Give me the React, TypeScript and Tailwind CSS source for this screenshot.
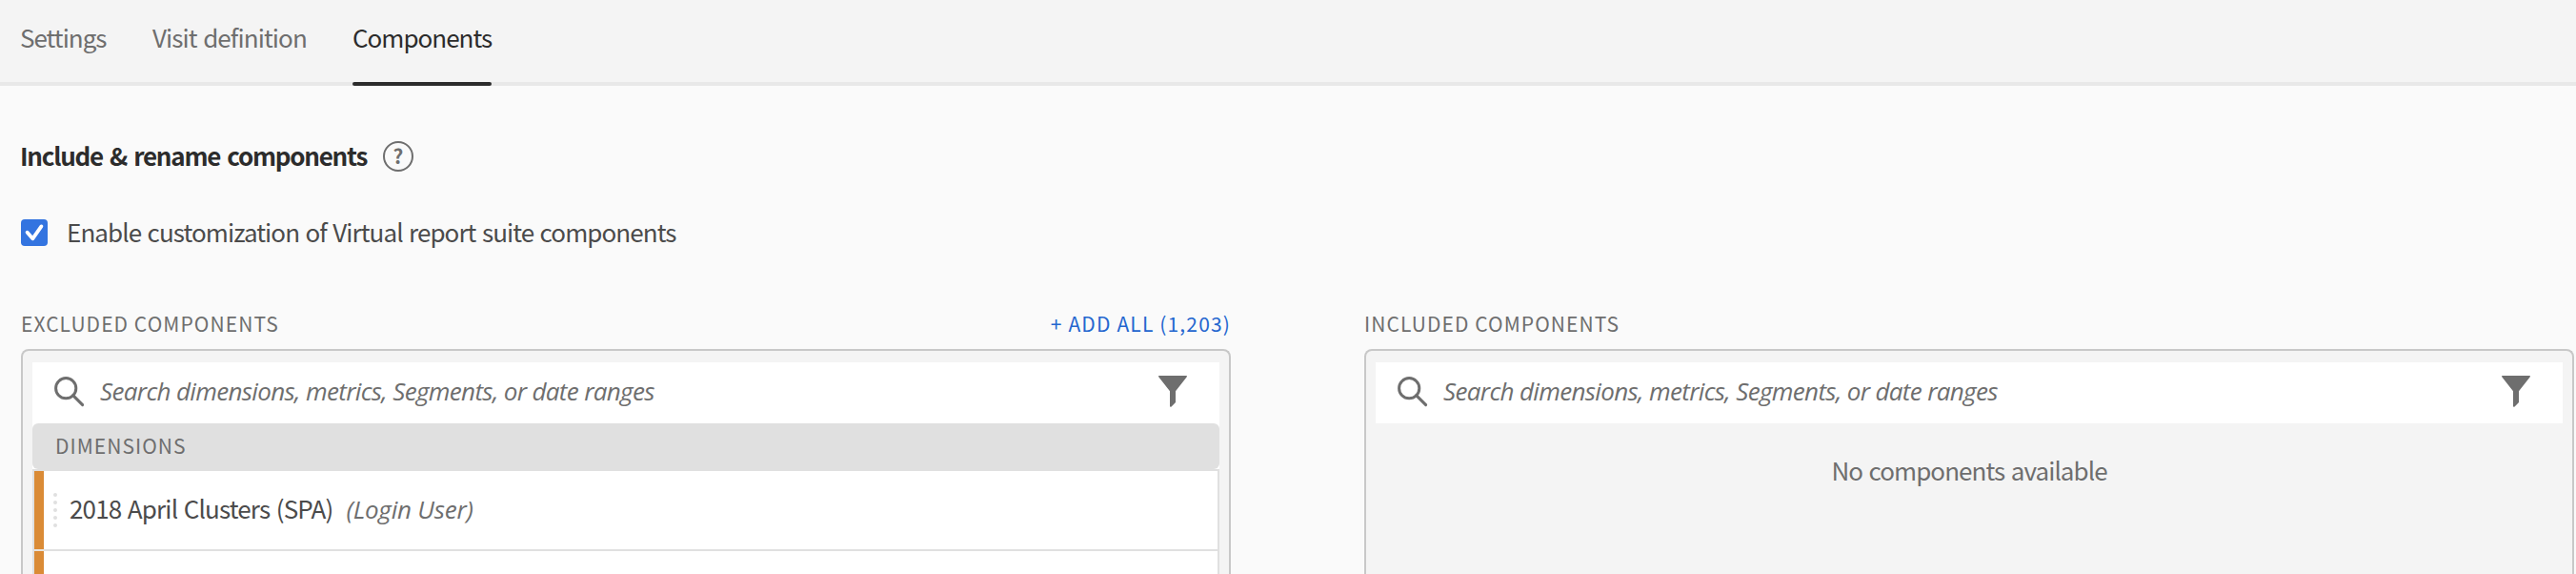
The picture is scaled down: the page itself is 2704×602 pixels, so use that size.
import type { ReactNode } from "react";

function SearchIcon() {
  return (
    <svg width="32" height="32" viewBox="0 0 32 32" fill="none" stroke="#6e6e6e" className="-mt-0.5 shrink-0">
      <circle cx="12.2" cy="12.2" r="10.6" strokeWidth="3" />
      <path d="M19.6 19.6 L29.6 29.6" strokeWidth="3" strokeLinecap="round" />
    </svg>
  );
}

function FunnelIcon() {
  return (
    <svg width="30" height="33" viewBox="0 0 30 33" fill="#6e6e6e" className="mt-[-3px] shrink-0">
      <path d="M0.6 0 H29.4 Q30 0 30 0.6 L29.6 1.4 L18 16.2 V28 L13.6 32.6 Q12 33.2 12 32 V16.2 L0.4 1.4 L0 0.6 Q0 0 0.6 0Z" />
    </svg>
  );
}

function SearchBar() {
  return (
    <div className="flex h-16 items-center bg-white pr-[34px] pl-[23px]">
      <SearchIcon />
      <span className="-mt-1 ml-4 flex-1 font-['Open_Sans',sans-serif] text-[26px] leading-8 tracking-[-0.66px] whitespace-nowrap text-[#6e6e6e] italic">
        Search dimensions, metrics, Segments, or date ranges
      </span>
      <FunnelIcon />
    </div>
  );
}

function Panel({ title, action, children }: { title: string; action?: string; children: ReactNode }) {
  return (
    <section className="flex w-[1270px] shrink-0 flex-col">
      <div className="flex h-[41px] justify-between text-[21px] leading-[29px] tracking-[1.07px] text-[#6e6e6e]">
        <h3>{title}</h3>
        {action && <button className="h-[29px] tracking-[1.15px] text-[#2466cf]">{action}</button>}
      </div>
      <div className="flex-1 rounded-t-lg border-2 border-b-0 border-[#c8c8c8] bg-[#f4f4f4] px-2.5 pt-3">
        <SearchBar />
        {children}
      </div>
    </section>
  );
}

function DragDots() {
  return (
    <div className="mt-[-1px] ml-2.5 flex flex-col gap-1">
      {[0, 1, 2, 3, 4].map((i) => (
        <span key={i} className="size-1 rounded-full bg-[#e0e0e0]" />
      ))}
    </div>
  );
}

function Row({ name, detail }: { name?: string; detail?: string }) {
  return (
    <div className="flex h-[84px] bg-white">
      <div className="w-2.5 border-b-2 border-[#e8e3dd] bg-[#da8b36]" />
      <div className="flex flex-1 items-center border-b-2 border-[#e0e0e0]">
        {name && (
          <>
            <DragDots />
            <div className="-mt-1 ml-[13px] flex items-baseline gap-[14px] text-[26px] leading-8 whitespace-nowrap">
              <span className="tracking-[-0.84px] text-[#4b4b4b] [word-spacing:1.5px]">{name}</span>
              <span className="font-['Open_Sans',sans-serif] tracking-[-0.2px] text-[#6e6e6e] italic">{detail}</span>
            </div>
          </>
        )}
      </div>
    </div>
  );
}

export default function App() {
  return (
    <div className="flex h-[602px] w-[2704px] flex-col overflow-hidden bg-[#fafafa] font-['Noto_Sans_CJK_SC',sans-serif]">
      <nav className="flex h-[90px] shrink-0 bg-[#f4f4f4] pl-[21px] text-[26px] leading-8 tracking-[-1px] whitespace-nowrap text-[#6e6e6e] shadow-[inset_0_-4px_0_#e8e8e8]">
        <div className="w-[139px] pt-[23px]">Settings</div>
        <div className="w-[210px] pt-[23px] tracking-[-0.9px] [word-spacing:1.5px]">Visit definition</div>
        <div className="flex w-[146px] flex-col justify-between pt-[23px] text-[#2c2c2c]">
          <span>Components</span>
          <span className="h-1 rounded-sm bg-[#2c2c2c]" />
        </div>
      </nav>

      <main className="flex flex-1 flex-col pl-[22px]">
        <div className="mt-14 flex h-8 items-center">
          <h2 className="mt-0.5 -ml-px w-[381px] text-[26px] leading-8 font-bold tracking-[-1.24px] whitespace-nowrap text-[#2c2c2c] [word-spacing:2.5px]">
            Include &amp; rename components
          </h2>
          <span className="mt-1 flex size-8 items-center justify-center rounded-full border-2 border-[#6e6e6e] text-[21px] leading-[28px] font-bold text-[#6e6e6e]">
            <span className="-mt-0.5">?</span>
          </span>
        </div>

        <label className="mt-12 flex h-9 items-center">
          <svg width="28" height="28" viewBox="0 0 28 28" fill="none">
            <rect width="28" height="28" rx="4" fill="#3374e0" />
            <path d="M6.6 13.7 L12.3 20.3 L21.4 7.4" stroke="#fff" strokeWidth="3.8" strokeLinecap="round" strokeLinejoin="round" />
          </svg>
          <span className="-mt-[3px] ml-5 text-[26px] leading-8 tracking-[-0.92px] whitespace-nowrap text-[#4b4b4b] [word-spacing:1.5px]">
            Enable customization of Virtual report suite components
          </span>
        </label>

        <div className="mt-[63px] flex flex-1 gap-[140px]">
          <Panel title="EXCLUDED COMPONENTS" action="+ ADD ALL (1,203)">
            <div className="border-x-2 border-[#e0e0e0]">
              <div className="-mx-0.5 bg-white">
                <div className="h-12 rounded-md bg-[#e0e0e0] pl-6 text-[21px] leading-[47px] tracking-[1.05px] text-[#6e6e6e]">
                  DIMENSIONS
                </div>
                <div className="h-0.5 bg-[#e0e0e0]" />
              </div>
              <Row name="2018 April Clusters (SPA)" detail="(Login User)" />
              <Row />
            </div>
          </Panel>
          <Panel title="INCLUDED COMPONENTS">
            <p className="pt-[33px] text-center text-[26px] leading-8 tracking-[-0.93px] text-[#6e6e6e] [word-spacing:1.5px]">
              No components available
            </p>
          </Panel>
        </div>
      </main>
    </div>
  );
}
